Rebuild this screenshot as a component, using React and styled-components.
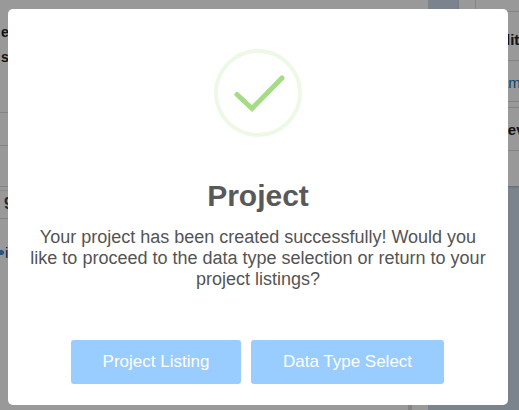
import React from 'react'
import styled, { createGlobalStyle } from 'styled-components'

const GlobalStyle = createGlobalStyle`
    html, body {
        margin: 0;
        padding: 0;
        height: 100%;
        overflow: hidden;
    }
    body {
        font-family: "Liberation Sans", Arial, sans-serif;
    }
`

const App = () => (
    <>
        <GlobalStyle />
        <Page>
            <MainCard>
                <MainHeader>
                    <HeaderLine>e</HeaderLine>
                    <HeaderLine>s</HeaderLine>
                </MainHeader>
                <MainRow height={33} />
                <MainRow height={41} />
                <SplitRow>
                    <RowMark>9</RowMark>
                </SplitRow>
                <InfoRow>
                    <InfoDot />
                    <InfoText>i</InfoText>
                </InfoRow>
                <BottomRule />
            </MainCard>
            <Gutter />
            <SideColumn>
                <SideCard>
                    <SideTabs>
                        <SideTab />
                    </SideTabs>
                    <SideSection height={49} pad={7} indent={32} bold>Edit</SideSection>
                    <SideSection height={41} pad={3} indent={30} link>Name</SideSection>
                    <SideGap />
                    <SideSection height={43} indent={38} bold>Rev</SideSection>
                    <SideRule />
                </SideCard>
            </SideColumn>
        </Page>
        <Overlay>
            <Modal>
                <SuccessIcon viewBox="0 0 88 88">
                    <circle cx="44" cy="44" r="42" fill="none" stroke="#edf8e6" strokeWidth="4" />
                    <path
                        d="M23 45.5L38 59.5L68 29"
                        fill="none"
                        stroke="#a5dc86"
                        strokeWidth="5"
                        strokeLinecap="round"
                        strokeLinejoin="miter"
                    />
                </SuccessIcon>
                <Title>Project</Title>
                <Message>
                    Your project has been created successfully! Would you like to proceed to the
                    data type selection or return to your project listings?
                </Message>
                <Actions>
                    <ActionButton width={170}>Project Listing</ActionButton>
                    <ActionButton width={193}>Data Type Select</ActionButton>
                </Actions>
            </Modal>
        </Overlay>
    </>
)

export default App

const Page = styled.div`
    display: flex;
    width: 519px;
    height: 410px;
    overflow: hidden;
    background: #cddce9;
`

const MainCard = styled.div`
    display: flex;
    flex-direction: column;
    position: relative;
    width: 428px;
    background: #fff;
    flex-shrink: 0;
`

const MainHeader = styled.div`
    display: flex;
    flex-direction: column;
    align-items: flex-start;
    gap: 7px;
    height: 113px;
    padding: 23px 0 0 1px;
    box-sizing: border-box;
    border-bottom: 1px solid #ddd;
`

const HeaderLine = styled.div`
    font-size: 14px;
    font-weight: 700;
    line-height: 18px;
    color: #222;
`

const MainRow = styled.div`
    height: ${({ height }) => height - 1}px;
    border-bottom: 1px solid #ddd;
`

const SplitRow = styled.div`
    height: 27px;
    margin-top: 3px;
    border-top: 1px solid #e6e6e6;
    border-bottom: 1px solid #ddd;
`

const RowMark = styled.span`
    display: block;
    padding: 4px 0 0 4px;
    font-size: 16px;
    font-weight: 700;
    color: #444;
`

const InfoRow = styled.div`
    display: flex;
    align-items: center;
    gap: 1px;
    margin-top: 25px;
`

const InfoDot = styled.span`
    width: 4px;
    height: 5px;
    border-radius: 0 3px 3px 0;
    background: #3a8fd6;
`

const InfoText = styled.span`
    font-size: 15px;
    color: #1a3f8a;
`

const BottomRule = styled.div`
    position: absolute;
    right: 16px;
    bottom: 0;
    width: 4px;
    height: 5px;
    background: #ddd;
`

const Gutter = styled.div`
    width: 31px;
    flex-shrink: 0;
`

const SideColumn = styled.div`
    flex: 1;
    min-width: 0;
`

const SideCard = styled.div`
    height: 186px;
    background: #fff;
    box-shadow: 0 1px 2px rgba(0, 0, 0, 0.2);
`

const SideTabs = styled.div`
    height: 11px;
`

const SideTab = styled.div`
    width: 16px;
    height: 100%;
    border-right: 1px solid #ddd;
`

const SideSection = styled.div`
    display: flex;
    align-items: center;
    height: ${({ height }) => height}px;
    padding: ${({ pad }) => pad || 0}px 0 0 ${({ indent }) => indent}px;
    box-sizing: border-box;
    border-top: 1px solid #ddd;
    font-size: 15px;
    white-space: nowrap;
    font-weight: ${({ bold }) => (bold ? 700 : 400)};
    color: ${({ link }) => (link ? '#1a6fa8' : '#222')};
`

const SideGap = styled.div`
    height: 5px;
    border-top: 1px solid #ddd;
`

const SideRule = styled.div`
    border-top: 1px solid #ddd;
`

const Overlay = styled.div`
    position: fixed;
    inset: 0;
    background: rgba(0, 0, 0, 0.4);
`

const Modal = styled.div`
    position: absolute;
    left: 8px;
    top: 9px;
    display: flex;
    flex-direction: column;
    align-items: center;
    width: 500px;
    height: 396px;
    padding-top: 40px;
    box-sizing: border-box;
    background: #fff;
    border-radius: 5px;
`

const SuccessIcon = styled.svg`
    width: 88px;
    height: 88px;
    flex-shrink: 0;
`

const Title = styled.h2`
    margin: 40px 0 0;
    font-size: 30px;
    font-weight: 700;
    line-height: 37px;
    color: #595959;
`

const Message = styled.p`
    width: 460px;
    margin: 13px 0 0;
    font-size: 18px;
    line-height: 21px;
    text-align: center;
    color: #545454;
`

const Actions = styled.div`
    display: flex;
    justify-content: center;
    gap: 10px;
    margin-top: auto;
    margin-bottom: 21px;
    padding-right: 1px;
`

const ActionButton = styled.button`
    width: ${({ width }) => width}px;
    height: 44px;
    padding: 0;
    border: 0;
    border-radius: 3px;
    background: #99ccff;
    color: #fff;
    font-family: inherit;
    font-size: 17px;
`
